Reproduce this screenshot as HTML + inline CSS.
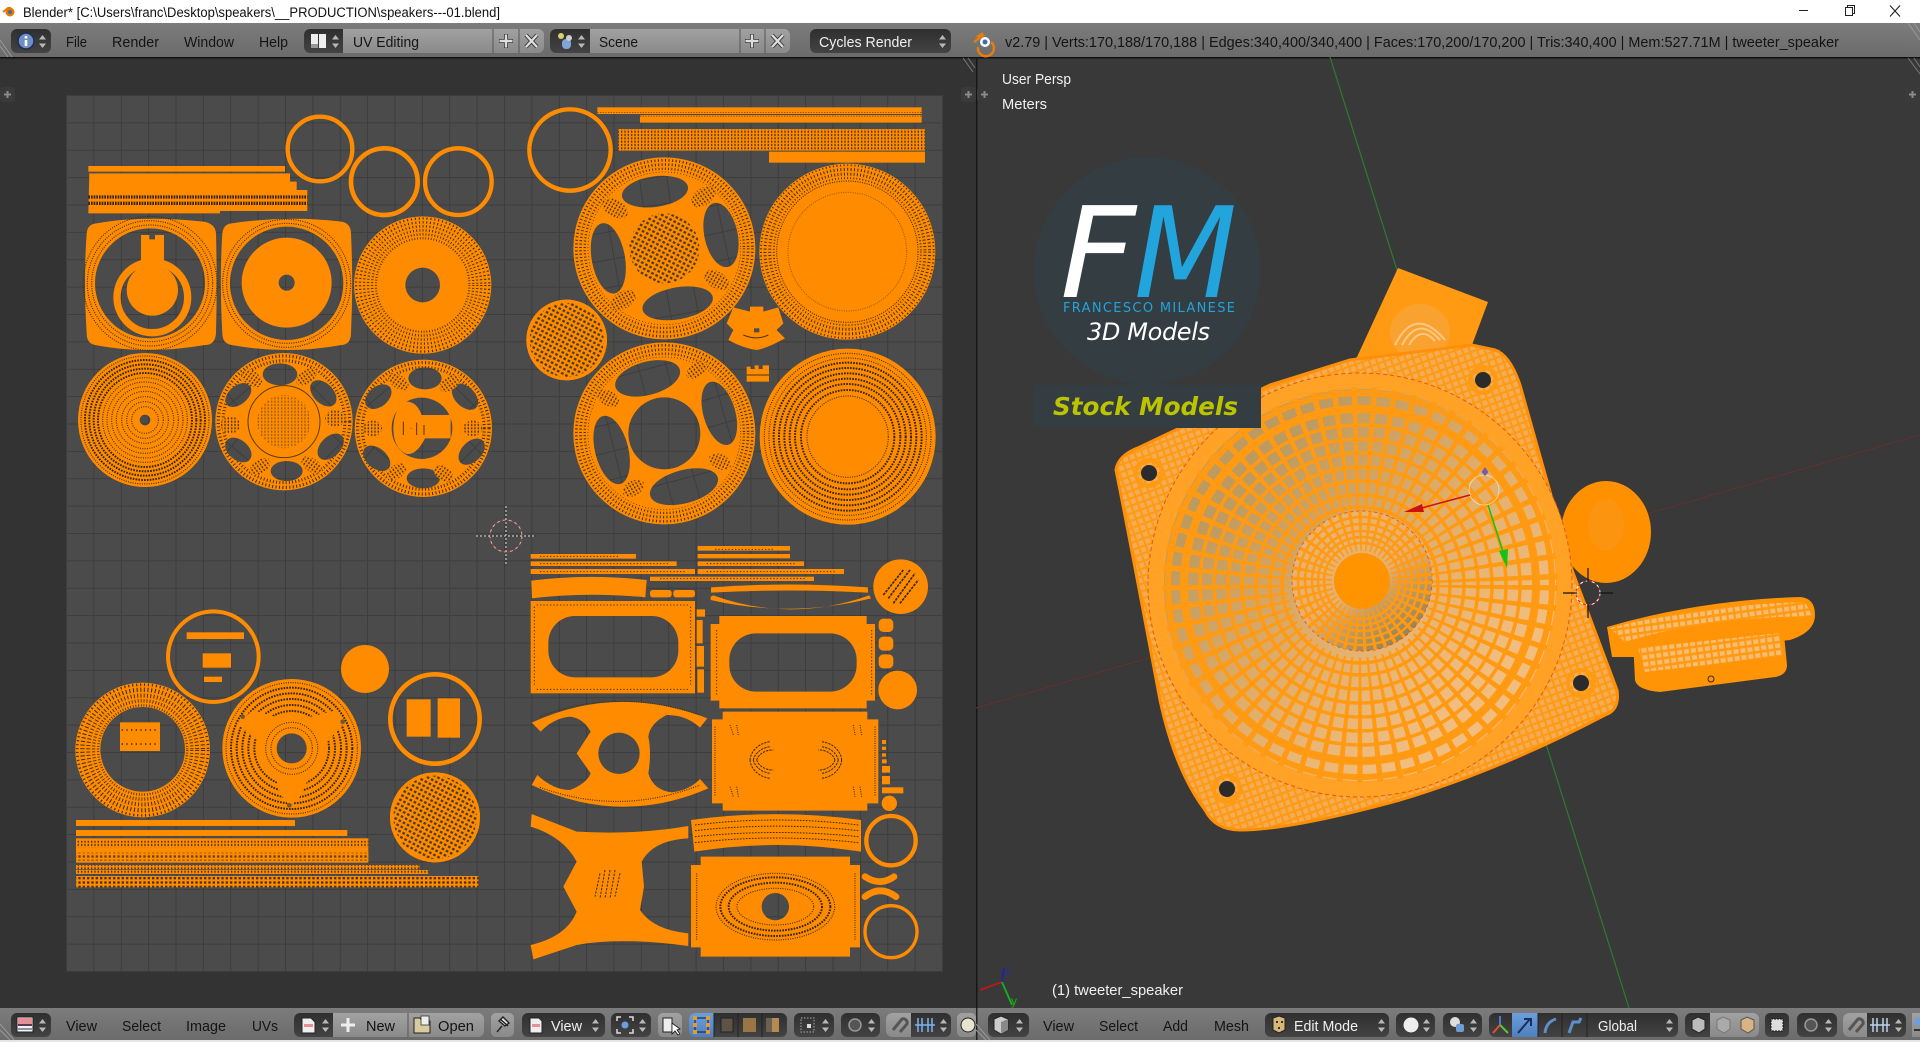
<!DOCTYPE html>
<html lang="en"><head><meta charset="utf-8"><title>Blender UV Editing</title>
<style>
html,body{margin:0;padding:0;background:#fff;width:1920px;height:1042px;overflow:hidden}
svg{display:block}
text{font-family:"Liberation Sans",sans-serif;font-size:15px}
.k{fill:#141414}.w{fill:#f0f0f0}
.d{fill:none;stroke:#44300f;stroke-width:3.500;stroke-dasharray:3 4}
.e{fill:none;stroke:#35260e;stroke-width:6;stroke-dasharray:5 3.500}
.s{fill:none;stroke:#44300f;stroke-dasharray:3 7}
.b{fill:none;stroke:#ff8c00;stroke-width:5}
.o{fill:#ff8c00}
.r{fill:none;stroke:#ff8c00}
.m3{fill:none;stroke:#ff9a12}
</style></head><body>
<svg xmlns="http://www.w3.org/2000/svg" width="1920" height="1042" viewBox="0 0 1920 1042">
<defs>
<linearGradient id="hd" x1="0" y1="0" x2="0" y2="1"><stop offset="0" stop-color="#7c7c7c"/><stop offset="1" stop-color="#6b6b6b"/></linearGradient>
<linearGradient id="dk" x1="0" y1="0" x2="0" y2="1"><stop offset="0" stop-color="#2f2f2f"/><stop offset="1" stop-color="#434343"/></linearGradient>
<linearGradient id="lt" x1="0" y1="0" x2="0" y2="1"><stop offset="0" stop-color="#a2a2a2"/><stop offset="1" stop-color="#8a8a8a"/></linearGradient>
<linearGradient id="bl" x1="0" y1="0" x2="0" y2="1"><stop offset="0" stop-color="#6d9fdc"/><stop offset="1" stop-color="#4f80be"/></linearGradient>
<pattern id="g" x="66" y="95" width="27.375" height="27.375" patternUnits="userSpaceOnUse"><rect width="28" height="28" fill="#4b4b4b"/><rect width="1" height="28" fill="#3d3d3d"/><rect width="28" height="1" fill="#3d3d3d"/></pattern>
<g id="tile"><rect width="83" height="83" fill="#4b4b4b"/><rect width="3" height="83" fill="#3d3d3d"/><rect width="83" height="3" fill="#3d3d3d"/></g>
<pattern id="h5" x="18" y="-15" width="82.125" height="82.125" patternUnits="userSpaceOnUse"><use href="#tile"/></pattern>
<pattern id="h9" x="-1362" y="-15" width="82.125" height="82.125" patternUnits="userSpaceOnUse"><use href="#tile"/></pattern>
<pattern id="h8" x="-1362" y="-1335" width="82.125" height="82.125" patternUnits="userSpaceOnUse"><use href="#tile"/></pattern>
<pattern id="h10" x="18" y="-1485" width="82.125" height="82.125" patternUnits="userSpaceOnUse"><use href="#tile"/></pattern>
<pattern id="mesh" width="14" height="14" patternUnits="userSpaceOnUse" patternTransform="rotate(28)"><rect width="14" height="14" fill="#ff8c00"/><rect x="3" y="3" width="8" height="7" fill="#4e3a1c"/></pattern>
<pattern id="row" width="10" height="10" patternUnits="userSpaceOnUse"><rect width="10" height="10" fill="#ff8c00"/><rect x="3" y="2" width="4" height="6" fill="#44300f"/></pattern>
<pattern id="row2" width="13" height="13" patternUnits="userSpaceOnUse"><rect width="13" height="13" fill="#ff8c00"/><rect x="3" y="3" width="7" height="7" fill="#44300f"/></pattern>
<pattern id="b3" width="7" height="7" patternUnits="userSpaceOnUse" patternTransform="rotate(-20)"><rect width="7" height="7" fill="#f3ad58"/><rect width="2.200" height="7" fill="#ff9a12"/><rect width="7" height="2.200" fill="#ff9a12"/></pattern>
<pattern id="b4" width="7" height="7" patternUnits="userSpaceOnUse" patternTransform="rotate(-8)"><rect width="7" height="7" fill="#f8bc72"/><rect width="2" height="7" fill="#ff9a12"/><rect width="7" height="2.600" fill="#ff9a12"/></pattern>
<linearGradient id="cone" x1=".1" y1=".1" x2=".9" y2=".9"><stop offset=".15" stop-color="#bd9a60"/><stop offset=".5" stop-color="#e0ad6a"/><stop offset=".85" stop-color="#f2be80"/></linearGradient>
<linearGradient id="dome" x1=".2" y1=".1" x2=".8" y2=".95"><stop offset="0" stop-color="#e9b472"/><stop offset=".5" stop-color="#e8b070"/><stop offset="1" stop-color="#8c8056"/></linearGradient>
<g id="ud"><path d="M0 4.500L3.500 0L7 4.500Z M0 8.500L3.500 13L7 8.500Z" fill="#b8b8b8"/></g>
<g id="plus"><rect width="15" height="15" rx="3" fill="#3a3a3a"/><path d="M7.500 4v7M4 7.500h7" stroke="#8a8a8a" stroke-width="2"/></g>
<g id="img"><rect width="16" height="15" fill="#f3f3f3" stroke="#222"/><rect x="1" y="1" width="14" height="6" fill="#e58f96"/><rect x="1" y="7" width="14" height="2" fill="#5c3a4f"/><rect x="1" y="11" width="14" height="2" fill="#8a93a8"/></g>
</defs>

<!-- title bar -->
<rect width="1920" height="1042" fill="#fff"/>
<circle cx="10" cy="12" r="4.500" fill="#ea7600"/><circle cx="10" cy="12" r="2" fill="#3e6ea8"/><path d="M3 12l5-4 3 0" stroke="#ea7600" stroke-width="2" fill="none"/>
<text x="23" y="17" textLength="477" lengthAdjust="spacingAndGlyphs" style="font-size:13.500px" fill="#111">Blender* [C:\Users\franc\Desktop\speakers\__PRODUCTION\speakers---01.blend]</text>
<path d="M1799 10.500h9" stroke="#222" stroke-width="1"/>
<path d="M1845.500 7.500h7v8h-7zM1847.500 7.500v-2h7v8h-2" fill="none" stroke="#222"/>
<path d="M1890 5.500l10 11M1900 5.500l-10 11" stroke="#222" stroke-width="1.100"/>

<!-- editors background -->
<rect x="0" y="23" width="1920" height="1017" fill="#333"/>
<rect x="977" y="57" width="943" height="952" fill="#393939"/>
<rect x="66" y="95" width="877" height="877" fill="url(#g)"/>

<!-- top header -->
<rect x="0" y="23" width="1920" height="34" fill="url(#hd)"/>
<rect x="0" y="57" width="1920" height="1.500" fill="#111"/>
<rect x="976" y="57" width="1.500" height="952" fill="#161616"/>
<path d="M0 40l12 17M0 46l8 11M1908 23l12 17M1914 23l6 9" stroke="#999" stroke-width="1" fill="none"/>
<path d="M963 58l10 14M968 58l7 10M1908 58l12 16M1914 58l6 9" stroke="#777" stroke-width="1" fill="none"/>
<use href="#plus" x="0" y="87"/><use href="#plus" x="977" y="87"/><use href="#plus" x="961" y="87"/><use href="#plus" x="1905" y="87"/>

<rect x="11" y="29" width="40" height="24" rx="6" fill="url(#dk)"/>
<circle cx="26" cy="41" r="8" fill="#6e8fc4" stroke="#1d2c55" stroke-width="1.500"/><rect x="24.700" y="40" width="2.600" height="6" fill="#fff"/><rect x="24.700" y="36" width="2.600" height="2.500" fill="#fff"/>
<use href="#ud" x="39" y="35"/>
<text class="k" x="66" y="47" textLength="21" lengthAdjust="spacingAndGlyphs">File</text>
<text class="k" x="112" y="47" textLength="47" lengthAdjust="spacingAndGlyphs">Render</text>
<text class="k" x="184" y="47" textLength="50" lengthAdjust="spacingAndGlyphs">Window</text>
<text class="k" x="259" y="47" textLength="29" lengthAdjust="spacingAndGlyphs">Help</text>

<rect x="304" y="29" width="240" height="24" rx="6" fill="url(#lt)"/>
<path d="M310 29h33v24h-33a6 6 0 0 1-6-6v-12a6 6 0 0 1 6-6z" fill="url(#dk)"/>
<rect x="311" y="34" width="7" height="14" fill="#eee"/><rect x="319" y="34" width="7" height="14" fill="#eee"/><rect x="311" y="44" width="7" height="4" fill="#999"/>
<use href="#ud" x="332" y="35"/>
<path d="M493 29v24M519 29v24" stroke="#555"/>
<text class="k" x="353" y="47" textLength="66" lengthAdjust="spacingAndGlyphs">UV Editing</text>
<path d="M506 34v14M499 41h14" stroke="#333" stroke-width="4"/><path d="M506 34.500v13M499.500 41h13" stroke="#ddd" stroke-width="2.400"/>
<path d="M526 35l11 12M537 35l-11 12" stroke="#333" stroke-width="4"/><path d="M526 35l11 12M537 35l-11 12" stroke="#ddd" stroke-width="2.400"/>

<rect x="550" y="29" width="240" height="24" rx="6" fill="url(#lt)"/>
<path d="M556 29h34v24h-34a6 6 0 0 1-6-6v-12a6 6 0 0 1 6-6z" fill="url(#dk)"/>
<circle cx="561" cy="36" r="3" fill="#d6d46c"/><rect x="562" y="39" width="9" height="10" rx="4" fill="#7da6d6"/><circle cx="569" cy="38" r="3" fill="#ccc"/>
<use href="#ud" x="578" y="35"/>
<path d="M740 29v24M765 29v24" stroke="#555"/>
<text class="k" x="599" y="47" textLength="39" lengthAdjust="spacingAndGlyphs">Scene</text>
<path d="M752 34v14M745 41h14" stroke="#333" stroke-width="4"/><path d="M752 34.500v13M745.500 41h13" stroke="#ddd" stroke-width="2.400"/>
<path d="M772 35l11 12M783 35l-11 12" stroke="#333" stroke-width="4"/><path d="M772 35l11 12M783 35l-11 12" stroke="#ddd" stroke-width="2.400"/>

<rect x="810" y="29" width="141" height="24" rx="6" fill="url(#dk)"/>
<text class="w" x="819" y="47" textLength="93" lengthAdjust="spacingAndGlyphs">Cycles Render</text>
<use href="#ud" x="939" y="35"/>

<circle cx="985" cy="42" r="5" fill="#ffffff"/><circle cx="985" cy="42" r="2.500" fill="#3e6ea8"/>
<path d="M974 42l8-6h-3l4-3M978 47a8 8 0 1 0 13-5" stroke="#e87d0d" stroke-width="2.500" fill="none"/>
<text class="k" x="1005" y="47" textLength="834" lengthAdjust="spacingAndGlyphs">v2.79 | Verts:170,188/170,188 | Edges:340,400/340,400 | Faces:170,200/170,200 | Tris:340,400 | Mem:527.71M | tweeter_speaker</text>

<!-- UV islands: first block -->
<g transform="translate(60 100) scale(.33333)">
<circle cx="780" cy="147" r="97" class="r" stroke-width="13"/>
<circle cx="973" cy="245" r="100" class="r" stroke-width="14"/>
<circle cx="1195" cy="245" r="100" class="r" stroke-width="13"/>
<rect x="85" y="198" width="590" height="17" class="o"/>
<path class="o" d="M88 220H690V245H710V270H742V333H480V340H85Z"/>
<path d="M85 291H742M85 310H742" stroke="#3a2408" stroke-width="10" stroke-dasharray="5 3"/>
<!-- square 1 -->
<path class="o" d="M110 370Q250 345 430 365Q465 370 468 400Q472 550 468 700Q465 735 435 735Q260 765 105 735Q80 730 80 700Q70 540 80 400Q82 372 110 370Z"/>
<circle cx="270" cy="550" r="175" class="d"/><circle cx="270" cy="550" r="188" class="d"/><circle cx="270" cy="550" r="201" class="d"/>
<circle cx="270" cy="550" r="165" fill="url(#h5)"/>
<circle cx="277" cy="592" r="106" class="r" stroke-width="22"/>
<circle cx="277" cy="570" r="77" class="o"/>
<path class="o" d="M243 405H268V418H285V405H312V500H243Z"/>
<!-- square 2 -->
<path class="o" d="M515 370Q680 345 845 365Q872 370 873 400Q880 550 873 700Q872 733 845 735Q680 765 515 735Q487 730 487 700Q478 540 487 400Q490 372 515 370Z"/>
<circle cx="680" cy="550" r="180" class="d"/><circle cx="680" cy="550" r="192" class="d"/>
<circle cx="680" cy="550" r="170" fill="url(#h5)"/>
<circle cx="680" cy="548" r="135" class="o"/><circle cx="680" cy="548" r="24" fill="url(#h5)"/>
<!-- disc 3 -->
<circle cx="1088" cy="555" r="206" class="o"/>
<circle cx="1088" cy="555" r="170" stroke-width="66" class="s"/>
<circle cx="1088" cy="555" r="194" class="b"/><circle cx="1088" cy="555" r="182" class="b"/><circle cx="1088" cy="555" r="170" class="b"/><circle cx="1088" cy="555" r="158" class="b"/><circle cx="1088" cy="555" r="146" class="b"/>
<circle cx="1088" cy="555" r="52" fill="url(#h5)"/>
<!-- row 2 disc -->
<circle cx="255" cy="960" r="201" class="o"/>
<circle cx="255" cy="960" r="192" class="d"/><circle cx="255" cy="960" r="180" class="e"/><circle cx="255" cy="960" r="167" class="e"/><circle cx="255" cy="960" r="154" class="e"/><circle cx="255" cy="960" r="141" class="e"/><circle cx="255" cy="960" r="127" class="d"/><circle cx="255" cy="960" r="114" class="d"/><circle cx="255" cy="960" r="100" class="d"/><circle cx="255" cy="960" r="86" class="d"/><circle cx="255" cy="960" r="70" class="d"/><circle cx="255" cy="960" r="55" class="d"/><circle cx="255" cy="960" r="40" class="d"/>
<circle cx="255" cy="960" r="16" fill="url(#h5)"/>
<!-- wheel 1 -->
<circle cx="672" cy="965" r="206" class="o"/>
<circle cx="672" cy="965" r="190" stroke-width="24" class="s"/><circle cx="672" cy="965" r="190" class="b"/>
<g fill="url(#h5)">
<ellipse cx="660" cy="823" rx="52" ry="33"/><ellipse cx="790" cy="880" rx="47" ry="30" transform="rotate(45 790 880)"/><ellipse cx="812" cy="1040" rx="47" ry="30" transform="rotate(-45 812 1040)"/><ellipse cx="680" cy="1113" rx="48" ry="30"/><ellipse cx="535" cy="1050" rx="45" ry="30" transform="rotate(40 535 1050)"/><ellipse cx="535" cy="885" rx="45" ry="28" transform="rotate(-40 535 885)"/>
</g>
<g fill="url(#row)"><ellipse cx="575" cy="835" rx="35" ry="22" transform="rotate(35 575 835)"/><ellipse cx="740" cy="830" rx="35" ry="20" transform="rotate(-35 740 830)"/><ellipse cx="825" cy="955" rx="30" ry="25"/><ellipse cx="755" cy="1095" rx="35" ry="20" transform="rotate(35 755 1095)"/><ellipse cx="600" cy="1100" rx="35" ry="20" transform="rotate(-35 600 1100)"/><ellipse cx="512" cy="975" rx="30" ry="25"/></g>
<circle cx="672" cy="965" r="108" fill="none" stroke="#5c3d10" stroke-width="3"/>
<circle cx="672" cy="965" r="80" fill="url(#row)" opacity=".55"/>
<!-- wheel 3 -->
<circle cx="1090" cy="985" r="206" class="o"/>
<circle cx="1090" cy="985" r="190" stroke-width="24" class="s"/><circle cx="1090" cy="985" r="190" class="b"/>
<g fill="url(#h5)">
<ellipse cx="1095" cy="835" rx="50" ry="33"/><ellipse cx="1215" cy="890" rx="47" ry="30" transform="rotate(45 1215 890)"/><ellipse cx="1235" cy="1055" rx="47" ry="30" transform="rotate(-45 1235 1055)"/><ellipse cx="1090" cy="1135" rx="50" ry="30"/><ellipse cx="950" cy="1075" rx="47" ry="30" transform="rotate(40 950 1075)"/><ellipse cx="955" cy="890" rx="45" ry="30" transform="rotate(-40 955 890)"/>
</g>
<g fill="url(#row)"><ellipse cx="1015" cy="845" rx="35" ry="20" transform="rotate(35 1015 845)"/><ellipse cx="1170" cy="850" rx="35" ry="20" transform="rotate(-35 1170 850)"/><ellipse cx="1238" cy="985" rx="28" ry="24"/><ellipse cx="1150" cy="1120" rx="33" ry="20" transform="rotate(35 1150 1120)"/><ellipse cx="1010" cy="1115" rx="33" ry="20" transform="rotate(-35 1010 1115)"/><ellipse cx="938" cy="985" rx="28" ry="24"/></g>
<circle cx="1085" cy="985" r="92" fill="url(#h5)"/>
<circle cx="1090" cy="985" r="105" class="r" stroke-width="20"/>
<path class="o" d="M1000 985Q1002 920 1040 905Q1070 905 1085 945H1172V1015H1095Q1070 1065 1040 1062Q1000 1045 1000 985Z"/>
<path d="M1030 965V1005M1052 985h2M1070 968V1005M1092 975V1005" stroke="#4d3412" stroke-width="3" fill="none"/>
</g>

<!-- UV islands: upper right block -->
<g transform="translate(520 100) scale(.33333)">
<circle cx="150" cy="150" r="122" class="r" stroke-width="13"/>
<rect x="232" y="22" width="973" height="20" class="o"/>
<rect x="360" y="45" width="845" height="23" class="o"/>
<rect x="295" y="87" width="920" height="65" fill="url(#row)"/>
<rect x="747" y="155" width="468" height="33" class="o"/>
<path d="M232 37H1205M360 48H1205" stroke="#4d3412" stroke-width="2" stroke-dasharray="4 4"/>
<!-- wheel A -->
<circle cx="433" cy="445" r="273" class="o"/>
<circle cx="433" cy="445" r="248" stroke-width="40" class="s"/>
<circle cx="433" cy="445" r="258" class="b"/><circle cx="433" cy="445" r="245" class="b"/><circle cx="433" cy="445" r="233" class="b"/>
<g fill="url(#h9)">
<ellipse cx="405" cy="275" rx="100" ry="46" transform="rotate(-8 405 275)"/>
<ellipse cx="603" cy="405" rx="50" ry="98" transform="rotate(-12 603 405)"/>
<ellipse cx="473" cy="610" rx="107" ry="48" transform="rotate(-10 473 610)"/>
<ellipse cx="265" cy="475" rx="50" ry="107" transform="rotate(-10 265 475)"/>
</g>
<circle cx="433" cy="445" r="105" fill="url(#mesh)"/>
<g fill="url(#row)"><ellipse cx="285" cy="325" rx="42" ry="25" transform="rotate(30 285 325)"/><ellipse cx="550" cy="290" rx="42" ry="25" transform="rotate(-35 550 290)"/><ellipse cx="590" cy="540" rx="42" ry="25" transform="rotate(30 590 540)"/><ellipse cx="310" cy="600" rx="42" ry="25" transform="rotate(-30 310 600)"/></g>
<!-- disc B -->
<circle cx="982" cy="455" r="264" class="o"/>
<circle cx="982" cy="455" r="240" stroke-width="44" class="s"/>
<circle cx="982" cy="455" r="254" class="b"/><circle cx="982" cy="455" r="240" class="b"/><circle cx="982" cy="455" r="226" class="b"/>
<circle cx="982" cy="455" r="212" class="d"/><circle cx="982" cy="455" r="178" class="d" opacity=".5"/>
<!-- sphere -->
<circle cx="140" cy="720" r="121" fill="url(#mesh)"/><circle cx="140" cy="720" r="116" fill="none" stroke="#ff8c00" stroke-width="10"/>
<!-- small part -->
<path class="o" d="M640 622L690 635V620H730V635L775 622L790 670L770 690L795 715Q740 745 710 750Q670 745 625 720L640 690L620 670Z"/>
<path d="M670 705Q710 722 745 705" fill="none" stroke="#4d3412" stroke-width="3"/>
<rect x="702" y="685" width="16" height="12" fill="#4b4b4b"/>
<path class="o" d="M680 800H692V807H704V796H716V807H728V796H747V845H680Z"/>
<path d="M680 825H747" stroke="#4d3412" stroke-width="3"/>
<!-- wheel C -->
<circle cx="433" cy="1000" r="273" class="o"/>
<circle cx="433" cy="1000" r="248" stroke-width="40" class="s"/>
<circle cx="433" cy="1000" r="258" class="b"/><circle cx="433" cy="1000" r="245" class="b"/><circle cx="433" cy="1000" r="233" class="b"/>
<g fill="url(#h9)">
<ellipse cx="383" cy="835" rx="100" ry="50" transform="rotate(-15 383 835)"/>
<ellipse cx="598" cy="940" rx="48" ry="98" transform="rotate(-16 598 940)"/>
<ellipse cx="492" cy="1160" rx="105" ry="50" transform="rotate(-15 492 1160)"/>
<ellipse cx="275" cy="1050" rx="50" ry="105" transform="rotate(-14 275 1050)"/>
<circle cx="433" cy="1000" r="108"/>
</g>
<g fill="url(#row)"><ellipse cx="265" cy="895" rx="35" ry="22" transform="rotate(30 265 895)"/><ellipse cx="530" cy="810" rx="35" ry="20" transform="rotate(-35 530 810)"/><ellipse cx="600" cy="1085" rx="35" ry="22" transform="rotate(25 600 1085)"/><ellipse cx="340" cy="1165" rx="35" ry="22" transform="rotate(-30 340 1165)"/></g>
<!-- disc D -->
<circle cx="983" cy="1010" r="264" class="o"/>
<circle cx="983" cy="1010" r="250" class="d"/><circle cx="983" cy="1010" r="236" class="d"/><circle cx="983" cy="1010" r="222" class="e"/><circle cx="983" cy="1010" r="206" class="e"/><circle cx="983" cy="1010" r="190" class="e"/><circle cx="983" cy="1010" r="174" class="e"/><circle cx="983" cy="1010" r="158" class="e"/><circle cx="983" cy="1010" r="140" class="e"/><circle cx="983" cy="1010" r="122" class="d"/>
</g>

<!-- UV islands: lower right block -->
<g transform="translate(520 540) scale(.33333)">
<g class="o"><rect x="32" y="42" width="316" height="14"/><rect x="32" y="64" width="438" height="14"/><rect x="32" y="87" width="493" height="15"/><rect x="533" y="18" width="277" height="14"/><rect x="533" y="42" width="277" height="13"/><rect x="533" y="64" width="319" height="14"/><rect x="533" y="87" width="439" height="15"/><rect x="390" y="110" width="492" height="13"/>
<path d="M34 122Q200 100 380 120L376 172Q200 155 36 175Z"/>
<rect x="390" y="150" width="65" height="22" rx="8"/><rect x="460" y="150" width="65" height="22" rx="8"/>
<path d="M573 142Q800 125 1044 142V158Q800 145 573 158Z"/>
<path d="M572 170L580 166Q810 250 1048 166L1053 175Q810 235 572 180Z"/>
</g>
<path d="M585 28H760M60 49H300M60 71H450M60 95H500M560 71H830M560 95H950M420 116H860" stroke="#4d3412" stroke-width="3" stroke-dasharray="4 6"/>
<circle cx="1142" cy="140" r="82" class="o"/>
<path d="M1090 165L1150 90M1105 175L1170 90M1120 190L1185 100M1140 190L1195 120" stroke="#3a2a12" stroke-width="5" stroke-dasharray="8 3"/>
<!-- rect 1 -->
<rect x="32" y="183" width="493" height="277" class="o"/>
<rect x="85" y="228" width="390" height="184" rx="80" fill="url(#h8)"/>
<path d="M43 200V440M512 200V440M50 195H510M50 448H510" stroke="#4d3412" stroke-width="3" stroke-dasharray="4 6"/>
<!-- bits -->
<g class="o"><rect x="530" y="208" width="25" height="22"/><rect x="530" y="240" width="18" height="70"/><rect x="530" y="318" width="22" height="62"/><rect x="532" y="388" width="20" height="70"/>
<rect x="1076" y="236" width="44" height="40" rx="14"/><rect x="1076" y="290" width="44" height="42" rx="14"/><rect x="1076" y="343" width="44" height="42" rx="14"/>
<circle cx="1133" cy="450" r="58"/>
<rect x="1086" y="600" width="12" height="12"/><rect x="1086" y="620" width="12" height="10"/><rect x="1086" y="640" width="12" height="10"/><rect x="1086" y="658" width="14" height="12"/><rect x="1086" y="678" width="24" height="20"/><rect x="1086" y="708" width="24" height="25"/><rect x="1086" y="742" width="64" height="18"/><circle cx="1108" cy="790" r="23"/>
</g>
<!-- rect 2 -->
<path class="o" d="M598 228H1040V252H1065V482H1040V505H598V482H572V252H598Z"/>
<rect x="628" y="280" width="382" height="175" rx="80" fill="url(#h8)"/>
<path d="M590 270V470M1055 270V470" stroke="#4d3412" stroke-width="3" stroke-dasharray="4 6"/>
<!-- bone 1 -->
<path class="o" d="M35 548Q290 430 562 535L540 563Q500 525 440 525Q390 550 385 590Q395 640 385 700Q400 750 455 757Q510 750 540 717L565 745Q300 860 35 735L52 705Q100 750 150 750Q200 730 212 700L170 640L212 575Q190 535 150 530Q100 535 62 575Z"/>
<circle cx="297" cy="640" r="62" fill="url(#h8)"/>
<path d="M60 530Q290 440 540 525M60 742Q300 830 540 735" class="d"/>
<!-- rect 3 -->
<path class="o" d="M608 515H1042V538H1075V790H1042V812H608V790H576V538H608Z"/>
<path d="M690 660a70 60 0 0 1 60-55M700 660a60 50 0 0 1 50-40M710 660a50 40 0 0 1 50-30M690 660a70 60 0 0 0 60 55M700 660a60 50 0 0 0 50 40M710 660a50 40 0 0 0 50 30M965 660a70 60 0 0 0-60-55M955 660a60 50 0 0 0-50-40M945 660a50 40 0 0 0-50-30M965 660a70 60 0 0 1-60 55M955 660a60 50 0 0 1-50 40M945 660a50 40 0 0 1-50 30" fill="none" stroke="#3a2a12" stroke-width="3" stroke-dasharray="7 3"/>
<path d="M585 560V770M1065 560V770M630 555l10 30M650 555l5 30M1000 555l5 30M1020 555l5 30M630 740l10 30M650 740l5 30M1000 740l5 30M1020 740l5 30" class="d"/>
<!-- band -->
<path class="o" d="M513 840Q770 805 1023 840V935Q770 895 523 935Z"/>
<path d="M525 855Q770 825 1015 855M525 872Q770 845 1015 872M525 890Q770 865 1015 890M525 908Q770 880 1015 908" fill="none" stroke="#3a2a12" stroke-width="3" stroke-dasharray="5 4"/>
<!-- bone 2 -->
<path class="o" d="M35 822L170 875Q350 885 505 858V895Q400 900 365 965L372 1040L360 1110Q400 1170 505 1180V1218Q300 1190 170 1215L40 1258L32 1215Q140 1190 170 1115L130 1040L170 965Q130 890 32 860Z"/>
<path d="M240 1000l-15 70M255 990l-15 85M270 990l-15 85M285 990l-15 85M300 1000l-15 70" stroke="#3a2a12" stroke-width="3" stroke-dasharray="7 4"/>
<!-- rect 4 -->
<path class="o" d="M542 950H990V975H1020V1222H990V1250H542V1222H513V975H542Z"/>
<ellipse cx="766" cy="1100" rx="178" ry="100" class="d"/><ellipse cx="766" cy="1100" rx="165" ry="88" class="e"/><ellipse cx="766" cy="1100" rx="140" ry="72" class="e"/><ellipse cx="766" cy="1100" rx="115" ry="55" class="d"/>
<circle cx="766" cy="1100" r="41" fill="url(#h8)"/>
<path d="M530 1000V1200M1005 1000V1200" class="d"/>
<!-- rings and squiggles -->
<circle cx="1113" cy="902" r="74" class="r" stroke-width="13"/>
<circle cx="1113" cy="1175" r="78" class="r" stroke-width="10"/>
<path d="M1035 1010Q1080 1040 1122 1010" fill="none" stroke="#ff8c00" stroke-width="20" stroke-linecap="round"/>
<path d="M1035 1070Q1080 1035 1128 1070" fill="none" stroke="#ff8c00" stroke-width="20" stroke-linecap="round"/>
</g>

<!-- UV islands: lower left block -->
<g transform="translate(60 590) scale(.33333)">
<circle cx="460" cy="200" r="136" class="r" stroke-width="12"/>
<rect x="380" y="127" width="172" height="20" class="o"/><rect x="428" y="190" width="85" height="43" class="o"/><rect x="432" y="260" width="54" height="16" class="o"/>
<circle cx="915" cy="237" r="72" class="o"/>
<circle cx="1125" cy="387" r="134" class="r" stroke-width="14"/>
<rect x="1040" y="328" width="72" height="112" class="o"/><rect x="1133" y="325" width="67" height="118" class="o"/>
<circle cx="1125" cy="682" r="135" fill="url(#mesh)"/><circle cx="1125" cy="682" r="130" fill="none" stroke="#ff8c00" stroke-width="10"/>
<!-- ring disc -->
<circle cx="248" cy="480" r="202" class="o"/>
<circle cx="248" cy="480" r="165" stroke-width="70" class="s"/>
<circle cx="248" cy="480" r="190" class="b"/><circle cx="248" cy="480" r="172" class="b"/><circle cx="248" cy="480" r="155" class="b"/><circle cx="248" cy="480" r="140" class="b"/>
<circle cx="248" cy="478" r="127" fill="url(#h10)"/>
<rect x="180" y="397" width="120" height="86" class="o"/>
<path d="M185 420H295M185 462H295" stroke="#4d3412" stroke-width="5" stroke-dasharray="4 10"/>
<!-- disc -->
<circle cx="695" cy="475" r="208" class="o"/>
<circle cx="695" cy="475" r="197" class="d"/><circle cx="695" cy="475" r="182" class="e"/><circle cx="695" cy="475" r="165" class="e"/><circle cx="695" cy="475" r="148" class="e"/><circle cx="695" cy="475" r="130" class="e"/><circle cx="695" cy="475" r="112" class="e"/>
<path class="o" d="M580 360L695 395L830 360L850 400L790 470L720 620L690 650L660 610L620 470L530 400Z"/>
<circle cx="695" cy="475" r="78" class="d"/><circle cx="695" cy="475" r="62" class="d"/>
<circle cx="695" cy="475" r="45" fill="url(#h10)"/>
<circle cx="548" cy="380" r="7" fill="#6a5a3a"/><circle cx="848" cy="395" r="7" fill="#6a5a3a"/><circle cx="688" cy="646" r="7" fill="#6a5a3a"/>
<!-- bars -->
<rect x="48" y="690" width="657" height="18" class="o"/><rect x="48" y="720" width="814" height="18" class="o"/>
<rect x="48" y="745" width="877" height="73" class="o"/>
<rect x="48" y="752" width="877" height="20" fill="url(#row)"/><rect x="48" y="788" width="877" height="24" fill="url(#row2)" opacity=".8"/>
<rect x="48" y="825" width="1030" height="13" fill="url(#row)"/><rect x="48" y="840" width="1057" height="12" fill="url(#row)"/>
<rect x="48" y="858" width="1207" height="34" fill="url(#row2)"/>
</g>

<!-- 2D cursor -->
<g fill="none">
<circle cx="506" cy="536" r="16" stroke="#ddd" stroke-width="1" stroke-dasharray="3 3" opacity=".8"/>
<circle cx="506" cy="536" r="16" stroke="#c33" stroke-width="1" stroke-dasharray="3 3" stroke-dashoffset="3" opacity=".8"/>
<path d="M506 506v60M476 536h60" stroke="#ddd" stroke-width="1" stroke-dasharray="2 2"/>
<path d="M506 506v60M476 536h60" stroke="#333" stroke-width="1" stroke-dasharray="2 2" stroke-dashoffset="2"/>
</g>

<!-- 3D view -->
<path d="M976 708L1920 435" stroke="#5d3232" stroke-width="1.200"/>
<path d="M1330 57L1629 1008" stroke="#2f7a2f" stroke-width="1.200"/>
<!-- back sphere -->
<ellipse cx="1606" cy="532" rx="45" ry="51" fill="#ff9000"/><ellipse cx="1606" cy="525" rx="18" ry="26" fill="#f79f3f" opacity=".25"/>
<!-- cylinder -->
<path d="M1607 627Q1700 600 1800 597Q1815 598 1815 615Q1815 632 1790 640L1640 657L1612 657Z" fill="#ff9406"/>
<path d="M1610 628Q1700 605 1805 602L1812 616Q1700 618 1625 642Z" fill="url(#b4)"/>
<path d="M1633 640L1783 625L1787 665Q1787 675 1775 677L1660 692Q1637 690 1635 680Z" fill="#ff9406"/>
<path d="M1638 648L1780 633L1783 656L1645 672Z" fill="url(#b4)"/>
<ellipse cx="1711" cy="679" rx="3" ry="3" fill="none" stroke="#3a2a10" stroke-width="1"/>
<!-- tab -->
<path d="M1398 268L1488 302L1472 345L1500 350L1400 400L1340 368L1357 357Z" fill="#ff9a12"/>
<ellipse cx="1420" cy="332" rx="30" ry="28" fill="#f2b266" opacity=".35"/>
<path d="M1395 345q20-40 50-5M1402 345q16-30 38-5M1409 345q12-20 26-4" fill="none" stroke="#f8c987" stroke-width="2"/>
<!-- body -->
<path d="M1116 470Q1118 455 1140 447L1270 385L1350 360L1472 345L1495 350Q1510 355 1520 385L1572 570L1617 690Q1620 710 1605 715Q1500 770 1400 800Q1290 830 1240 830Q1215 830 1205 810Q1175 770 1160 700Q1130 540 1116 470Z" fill="url(#b3)"/>
<path d="M1116 470Q1118 455 1140 447L1270 385L1350 360L1472 345L1495 350Q1510 355 1520 385L1572 570L1617 690Q1620 710 1605 715Q1500 770 1400 800Q1290 830 1240 830Q1215 830 1205 810Q1175 770 1160 700Q1130 540 1116 470Z" fill="none" stroke="#ff8f08" stroke-width="3"/>
<!-- cone -->
<circle cx="1360" cy="585" r="212" fill="#ffa226"/>
<circle cx="1360" cy="585" r="212" fill="none" stroke="#e5580c" stroke-width="1" stroke-dasharray="4 3"/>
<circle cx="1360" cy="585" r="196" fill="url(#cone)"/>
<g class="m3">
<circle cx="1360" cy="585" r="192" stroke-width="6"/><circle cx="1360" cy="585" r="176" stroke-width="8"/><circle cx="1360" cy="585" r="160" stroke-width="3.500"/><circle cx="1360" cy="585" r="146" stroke-width="3.500"/><circle cx="1360" cy="585" r="132" stroke-width="3.500"/><circle cx="1360" cy="585" r="118" stroke-width="3.500"/><circle cx="1360" cy="585" r="104" stroke-width="3.500"/><circle cx="1360" cy="585" r="90" stroke-width="3.500"/><circle cx="1360" cy="585" r="78" stroke-width="3.500"/>
<circle cx="1360" cy="585" r="135" stroke-width="125" stroke-dasharray="4 10"/>
</g>
<circle cx="1362" cy="581" r="70" fill="url(#dome)" stroke="#e5580c" stroke-width="1" stroke-dasharray="3 3"/>
<g class="m3" stroke-width="2.500">
<circle cx="1362" cy="581" r="64"/><circle cx="1362" cy="581" r="57"/><circle cx="1362" cy="581" r="50"/><circle cx="1362" cy="581" r="44"/><circle cx="1362" cy="581" r="38"/>
<circle cx="1362" cy="581" r="50" stroke-width="40" stroke-dasharray="2.500 5"/>
</g>
<circle cx="1362" cy="581" r="28" fill="#ff9400"/>
<!-- mount holes -->
<g fill="none" stroke="#ff9a12" stroke-width="4"><circle cx="1149" cy="473" r="13"/><circle cx="1581" cy="683" r="13"/><circle cx="1227" cy="789" r="13"/><circle cx="1483" cy="380" r="13"/></g>
<g fill="#2b2b2b"><circle cx="1149" cy="473" r="8"/><circle cx="1581" cy="683" r="8"/><circle cx="1227" cy="789" r="8"/><circle cx="1483" cy="380" r="8"/></g>
<!-- gizmo -->
<ellipse cx="1484" cy="490" rx="15" ry="15" fill="none" stroke="#fff" stroke-width=".8" opacity=".6"/>
<path d="M1485 467l3.500 5-3.500 4-3.500-4z" fill="#7a5aa8"/>
<path d="M1470 495L1414 510" stroke="#cc1111" stroke-width="1.500"/><path d="M1404 512L1422 504L1424 512Z" fill="#cc1111"/>
<path d="M1488 505L1503 552" stroke="#12c312" stroke-width="1.500"/><path d="M1507 568L1499 551L1508 549Z" fill="#12c312"/>
<!-- 3D cursor -->
<circle cx="1588" cy="593" r="12" fill="none" stroke="#fff" stroke-width="1" stroke-dasharray="3 3"/>
<circle cx="1588" cy="593" r="12" fill="none" stroke="#d22" stroke-width="1" stroke-dasharray="3 3" stroke-dashoffset="3"/>
<path d="M1588 568V582M1588 604V618M1563 593H1577M1599 593H1613" stroke="#111" stroke-width="1.200"/>

<!-- overlay text -->
<text class="w" x="1002" y="84" textLength="69" lengthAdjust="spacingAndGlyphs">User Persp</text>
<text class="w" x="1002" y="109" textLength="45" lengthAdjust="spacingAndGlyphs">Meters</text>
<text class="w" x="1052" y="995" textLength="131" lengthAdjust="spacingAndGlyphs">(1) tweeter_speaker</text>
<path d="M1002 982L980 990" stroke="#b81a1a" stroke-width="1.800"/><path d="M1002 982L1004 968" stroke="#2222a5" stroke-width="1.800"/><path d="M1002 982L1012 1005" stroke="#18b018" stroke-width="1.800"/>
<text x="1005" y="975" style="font-size:11px" fill="#2a2aa8">z</text><text x="1011" y="1005" style="font-size:12px" fill="#18b018">y</text>

<!-- logo -->
<circle cx="1147.300" cy="270.700" r="113.500" fill="#333d42"/>
<rect x="1033" y="385" width="228" height="43" fill="#333d42"/>
<rect x="1135" y="380" width="26" height="6" fill="#333d42"/>
<text x="1060" y="297" style="font-family:'DejaVu Sans',sans-serif;font-style:italic;font-size:126px" fill="#fff" textLength="76" lengthAdjust="spacingAndGlyphs">F</text>
<text x="1134" y="297" style="font-family:'DejaVu Sans',sans-serif;font-style:italic;font-size:126px" fill="#22a4dc" textLength="103" lengthAdjust="spacingAndGlyphs">M</text>
<text x="1063" y="312" style="font-family:'DejaVu Sans',sans-serif;font-size:13px" fill="#22a4dc" textLength="172" lengthAdjust="spacing">FRANCESCO MILANESE</text>
<text x="1087" y="340" style="font-family:'DejaVu Sans',sans-serif;font-style:italic;font-size:24px" fill="#fff" textLength="123" lengthAdjust="spacing">3D Models</text>
<text x="1053" y="415" style="font-family:'DejaVu Sans',sans-serif;font-style:italic;font-weight:bold;font-size:25px" fill="#bcc400" textLength="185" lengthAdjust="spacingAndGlyphs">Stock Models</text>

<!-- bottom headers -->
<rect x="0" y="1008" width="1920" height="32" fill="url(#hd)"/>
<rect x="976" y="1008" width="1.500" height="32" fill="#222"/>
<rect x="0" y="1040" width="1920" height="2" fill="#e6e6e6"/>
<path d="M0 1024l14 16M0 1030l10 10M976 1024l14 16M976 1030l10 10" stroke="#999" stroke-width="1"/>

<!-- left bottom -->
<rect x="11" y="1013" width="40" height="24" rx="6" fill="url(#dk)"/><use href="#img" x="17" y="1017"/><use href="#ud" x="39" y="1019"/>
<text class="k" x="66" y="1031" textLength="31" lengthAdjust="spacingAndGlyphs">View</text>
<text class="k" x="122" y="1031" textLength="39" lengthAdjust="spacingAndGlyphs">Select</text>
<text class="k" x="186" y="1031" textLength="40" lengthAdjust="spacingAndGlyphs">Image</text>
<text class="k" x="252" y="1031" textLength="26" lengthAdjust="spacingAndGlyphs">UVs</text>
<rect x="294" y="1013" width="190" height="24" rx="6" fill="url(#lt)"/>
<path d="M300 1013h33v24h-33a6 6 0 0 1-6-6v-12a6 6 0 0 1 6-6z" fill="url(#dk)"/>
<path d="M302 1018h9l4 4v11h-13z" fill="#eee" stroke="#222"/><rect x="304" y="1024" width="9" height="3" fill="#e58f96"/>
<use href="#ud" x="322" y="1019"/>
<path d="M408 1013v24" stroke="#555"/>
<path d="M348 1018v14M341 1025h14" stroke="#eee" stroke-width="3"/>
<text class="k" x="366" y="1031" textLength="29" lengthAdjust="spacingAndGlyphs">New</text>
<path d="M414 1018h6l2 3h8v12h-16z" fill="#d8cc9f" stroke="#222"/><rect x="421" y="1016" width="8" height="9" fill="#eee" stroke="#333" stroke-width=".8"/>
<text class="k" x="438" y="1031" textLength="36" lengthAdjust="spacingAndGlyphs">Open</text>
<rect x="491" y="1013" width="23" height="24" rx="5" fill="url(#lt)"/>
<path d="M497 1032l5-6M500 1019l8 7M503 1017l6 6-4 3-6-5z" stroke="#222" stroke-width="1.400" fill="#ddd"/>
<rect x="522" y="1013" width="83" height="24" rx="6" fill="url(#dk)"/>
<path d="M530 1018h9l3 3v12h-12z" fill="#eee" stroke="#222"/><rect x="532" y="1024" width="8" height="3" fill="#e58f96"/>
<text class="w" x="551" y="1031" textLength="31" lengthAdjust="spacingAndGlyphs">View</text><use href="#ud" x="592" y="1019"/>
<rect x="611" y="1013" width="40" height="24" rx="6" fill="url(#dk)"/>
<path d="M617 1021v-4h4M629 1017h4v4M633 1029v4h-4M621 1033h-4v-4" stroke="#ddd" fill="none" stroke-width="1.500"/><circle cx="625" cy="1025" r="3.500" fill="#6aa0e0"/><use href="#ud" x="639" y="1019"/>
<rect x="658" y="1013" width="24" height="24" rx="5" fill="url(#lt)"/>
<rect x="663" y="1018" width="9" height="14" fill="#eee" stroke="#222"/><path d="M672 1023l0 11 3-3 3 4 2-1-3-4 3-1z" fill="#fff" stroke="#111" stroke-width=".8"/>
<rect x="689" y="1013" width="98" height="24" rx="6" fill="url(#dk)"/>
<path d="M695 1013h19v24h-19a6 6 0 0 1-6-6v-12a6 6 0 0 1 6-6z" fill="url(#bl)"/>
<rect x="695" y="1018" width="13" height="14" fill="none" stroke="#1a2b55" stroke-width="1.200"/><g fill="#e89a2c"><rect x="693" y="1016" width="4" height="4"/><rect x="706" y="1016" width="4" height="4"/><rect x="693" y="1030" width="4" height="4"/><rect x="706" y="1030" width="4" height="4"/><rect x="693" y="1023" width="4" height="4"/><rect x="706" y="1023" width="4" height="4"/></g>
<rect x="721" y="1018" width="12" height="14" fill="#5d5445" stroke="#222"/><rect x="743" y="1018" width="13" height="14" fill="#9a7644"/><rect x="766" y="1018" width="6" height="14" fill="#6b6052"/><rect x="772" y="1018" width="7" height="14" fill="#b58a50"/>
<path d="M714 1013v24M738 1013v24M762 1013v24" stroke="#222"/>
<rect x="794" y="1013" width="40" height="24" rx="6" fill="url(#dk)"/><rect x="801" y="1018" width="13" height="14" fill="none" stroke="#aaa" stroke-dasharray="1.500 1.500"/><rect x="807" y="1024" width="4" height="4" fill="#ddd"/><use href="#ud" x="822" y="1019"/>
<rect x="841" y="1013" width="39" height="24" rx="6" fill="url(#dk)"/><circle cx="855" cy="1025" r="6" fill="#555" stroke="#999" stroke-width="1.500"/><use href="#ud" x="868" y="1019"/>
<rect x="886" y="1013" width="65" height="24" rx="6" fill="url(#dk)"/>
<path d="M892 1013h19v24h-19a6 6 0 0 1-6-6v-12a6 6 0 0 1 6-6z" fill="url(#lt)"/>
<path d="M893 1030l9-11a4 4 0 0 1 5 5l-7 8" fill="none" stroke="#555" stroke-width="3"/>
<path d="M918 1018v14M922 1018v14M928 1018v14M932 1018v14M915 1025h20" stroke="#7fb3ee" stroke-width="1.500"/><use href="#ud" x="940" y="1019"/>
<rect x="957" y="1013" width="19" height="24" rx="5" fill="url(#lt)"/><circle cx="968" cy="1025" r="7" fill="#e4e4cf" stroke="#222"/>

<!-- right bottom -->
<rect x="988" y="1013" width="41" height="24" rx="6" fill="url(#dk)"/>
<path d="M994 1019l7-3 7 3v11l-7 4-7-4z" fill="#ccc" stroke="#222"/><path d="M1001 1022v12l7-4v-11z" fill="#888"/><use href="#ud" x="1016" y="1019"/>
<text class="k" x="1043" y="1031" textLength="31" lengthAdjust="spacingAndGlyphs">View</text>
<text class="k" x="1099" y="1031" textLength="39" lengthAdjust="spacingAndGlyphs">Select</text>
<text class="k" x="1163" y="1031" textLength="25" lengthAdjust="spacingAndGlyphs">Add</text>
<text class="k" x="1214" y="1031" textLength="35" lengthAdjust="spacingAndGlyphs">Mesh</text>
<rect x="1265" y="1013" width="124" height="24" rx="6" fill="url(#dk)"/>
<path d="M1273 1018l6-2 6 2v12l-6 3-6-3z" fill="#d9b777" stroke="#222"/><g fill="#333"><rect x="1276" y="1021" width="2" height="2"/><rect x="1281" y="1021" width="2" height="2"/><rect x="1278" y="1027" width="2" height="2"/></g>
<text class="w" x="1294" y="1031" textLength="64" lengthAdjust="spacingAndGlyphs">Edit Mode</text><use href="#ud" x="1378" y="1019"/>
<rect x="1396" y="1013" width="39" height="24" rx="6" fill="url(#dk)"/><circle cx="1411" cy="1025" r="7.500" fill="#eee"/><use href="#ud" x="1423" y="1019"/>
<rect x="1443" y="1013" width="39" height="24" rx="6" fill="url(#dk)"/><circle cx="1455" cy="1022" r="5" fill="#ddd"/><rect x="1456" y="1024" width="8" height="8" rx="2" fill="#6e9bd2"/><use href="#ud" x="1470" y="1019"/>
<rect x="1489" y="1013" width="189" height="24" rx="6" fill="url(#dk)"/>
<rect x="1512" y="1013" width="26" height="24" fill="url(#bl)"/>
<path d="M1500 1025V1016" stroke="#4c7ad0" stroke-width="2"/><path d="M1500 1025L1493 1033" stroke="#e25030" stroke-width="2"/><path d="M1500 1025L1508 1033" stroke="#5fbf40" stroke-width="2"/>
<path d="M1518 1033l12-14M1524 1019h7v7" fill="none" stroke="#16305e" stroke-width="2"/>
<path d="M1545 1033q1-11 11-14" fill="none" stroke="#5f8fc9" stroke-width="3"/>
<path d="M1569 1033l4-11h6l2-4" fill="none" stroke="#5f8fc9" stroke-width="3"/>
<path d="M1538 1013v24M1562 1013v24M1587 1013v24" stroke="#222"/>
<text class="w" x="1598" y="1031" textLength="39" lengthAdjust="spacingAndGlyphs">Global</text><use href="#ud" x="1666" y="1019"/>
<rect x="1685" y="1013" width="74" height="24" rx="6" fill="url(#lt)"/>
<path d="M1691 1013h19v24h-19a6 6 0 0 1-6-6v-12a6 6 0 0 1 6-6z" fill="url(#dk)"/>
<path d="M1692 1020l6-3 7 3v9l-6 4-7-4z" fill="#bbb" stroke="#222"/><path d="M1717 1020l6-3 7 3v9l-6 4-7-4z" fill="#aaa" stroke="#777"/><path d="M1741 1020l6-3 7 3v9l-6 4-7-4z" fill="#d8b384" stroke="#555"/>
<rect x="1765" y="1013" width="24" height="24" rx="5" fill="url(#dk)"/><rect x="1771" y="1019" width="12" height="12" fill="#ddd" stroke="#111" stroke-dasharray="2 1"/>
<rect x="1797" y="1013" width="40" height="24" rx="6" fill="url(#dk)"/><circle cx="1811" cy="1025" r="6" fill="#555" stroke="#999" stroke-width="1.500"/><use href="#ud" x="1825" y="1019"/>
<rect x="1843" y="1013" width="63" height="24" rx="6" fill="url(#dk)"/>
<path d="M1849 1013h18v24h-18a6 6 0 0 1-6-6v-12a6 6 0 0 1 6-6z" fill="url(#lt)"/>
<path d="M1849 1030l9-11a4 4 0 0 1 5 5l-7 8" fill="none" stroke="#555" stroke-width="3"/>
<path d="M1873 1018v14M1877 1018v14M1883 1018v14M1887 1018v14M1870 1025h20" stroke="#bcd2ec" stroke-width="1.500"/><use href="#ud" x="1895" y="1019"/>
<rect x="1912" y="1013" width="8" height="24" fill="url(#lt)"/><rect x="1915" y="1018" width="5" height="7" fill="#6aa0e0"/><path d="M1914 1030h6" stroke="#333" stroke-width="2"/>
</svg>
</body></html>
